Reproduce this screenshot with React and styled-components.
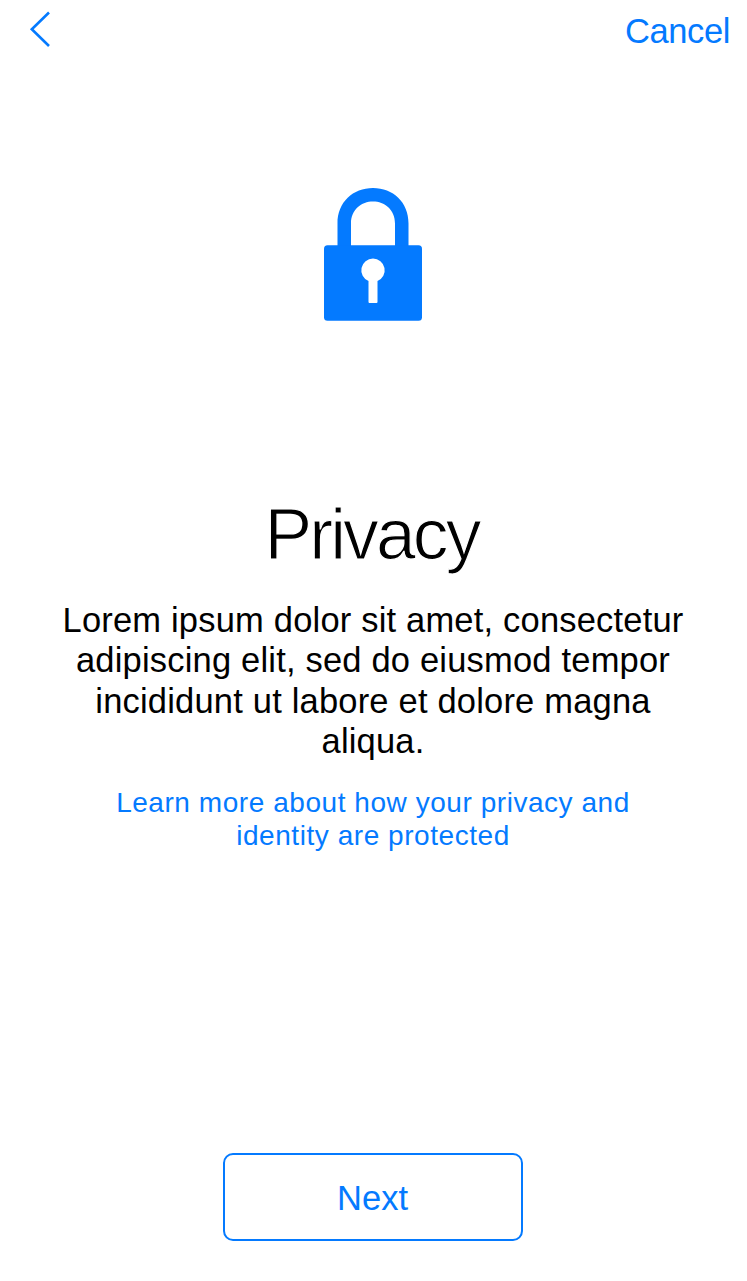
import React from "react";
import styled, { createGlobalStyle } from "styled-components";

const blue = "#047aff";

const GlobalStyle = createGlobalStyle`
  body {
    margin: 0;
    background: #fff;
  }
  *, *::before, *::after {
    box-sizing: border-box;
  }
`;

const Screen = styled.main`
  display: flex;
  flex-direction: column;
  align-items: center;
  width: 747px;
  height: 1281px;
  padding: 0 1px 40px 0;
  background: #fff;
  color: #000;
  font-family: "Liberation Sans", Arial, sans-serif;
  overflow: hidden;
`;

const NavBar = styled.header`
  display: flex;
  align-items: center;
  justify-content: space-between;
  align-self: stretch;
  height: 62px;
  padding: 0 16px 0 29px;
`;

const TextButton = styled.button`
  display: flex;
  padding: 0;
  border: 0;
  background: none;
  color: ${blue};
  font: 34.5px/40px "Liberation Sans", Arial, sans-serif;
  letter-spacing: -0.4px;
`;

const BackIcon = styled.svg`
  display: block;
  margin-top: -4px;
`;

const LockIcon = styled.svg`
  display: block;
  margin-top: 126px;
`;

const Title = styled.h1`
  margin: 171px 0 0;
  padding-right: 3px;
  font-size: 71.5px;
  line-height: 84px;
  font-weight: 400;
  letter-spacing: -2.9px;
  -webkit-text-stroke: 1.2px #fff;
`;

const Description = styled.p`
  width: 640px;
  margin: 24px 0 0;
  font-size: 34.5px;
  line-height: 40.4px;
  letter-spacing: 0.19px;
  text-align: center;
`;

const LearnMore = styled.a`
  width: 540px;
  margin-top: 24px;
  color: ${blue};
  font-size: 28px;
  line-height: 33px;
  letter-spacing: 0.55px;
  text-align: center;
  text-decoration: none;
`;

const NextButton = styled.button`
  width: 300px;
  height: 88px;
  margin-top: auto;
  padding: 1px 1px 0 0;
  border: 2px solid ${blue};
  border-radius: 10px;
  background: #fff;
  color: ${blue};
  font: 34.5px/40px "Liberation Sans", Arial, sans-serif;
`;

export default function App() {
  return (
    <>
      <GlobalStyle />
      <Screen>
        <NavBar>
          <TextButton aria-label="Back">
            <BackIcon width="22" height="38" viewBox="0 0 22 38" fill="none">
              <path d="M20 2.5 2.8 19.2 20 36" stroke={blue} strokeWidth="2.6" />
            </BackIcon>
          </TextButton>
          <TextButton>Cancel</TextButton>
        </NavBar>
        <LockIcon width="98" height="133" viewBox="0 0 98 133">
          <path
            d="M13.5 58V35.5C13.5 14 29 0 49 0S84.5 14 84.5 35.5V58H71V35.5C71 21.5 60.5 13.5 49 13.5S27 21.5 27 35.5V58Z"
            fill={blue}
          />
          <rect y="57.2" width="98" height="75.6" rx="3.5" fill={blue} />
          <path
            d="M49 70.5a11.7 11.7 0 0 1 4.5 22.5V114q0 1-1 1h-7q-1 0-1-1V93A11.7 11.7 0 0 1 49 70.5Z"
            fill="#fff"
          />
        </LockIcon>
        <Title>Privacy</Title>
        <Description>
          Lorem ipsum dolor sit amet, consectetur adipiscing elit, sed do
          eiusmod tempor incididunt ut labore et dolore magna aliqua.
        </Description>
        <LearnMore>
          Learn more about how your privacy and identity are protected
        </LearnMore>
        <NextButton>Next</NextButton>
      </Screen>
    </>
  );
}
